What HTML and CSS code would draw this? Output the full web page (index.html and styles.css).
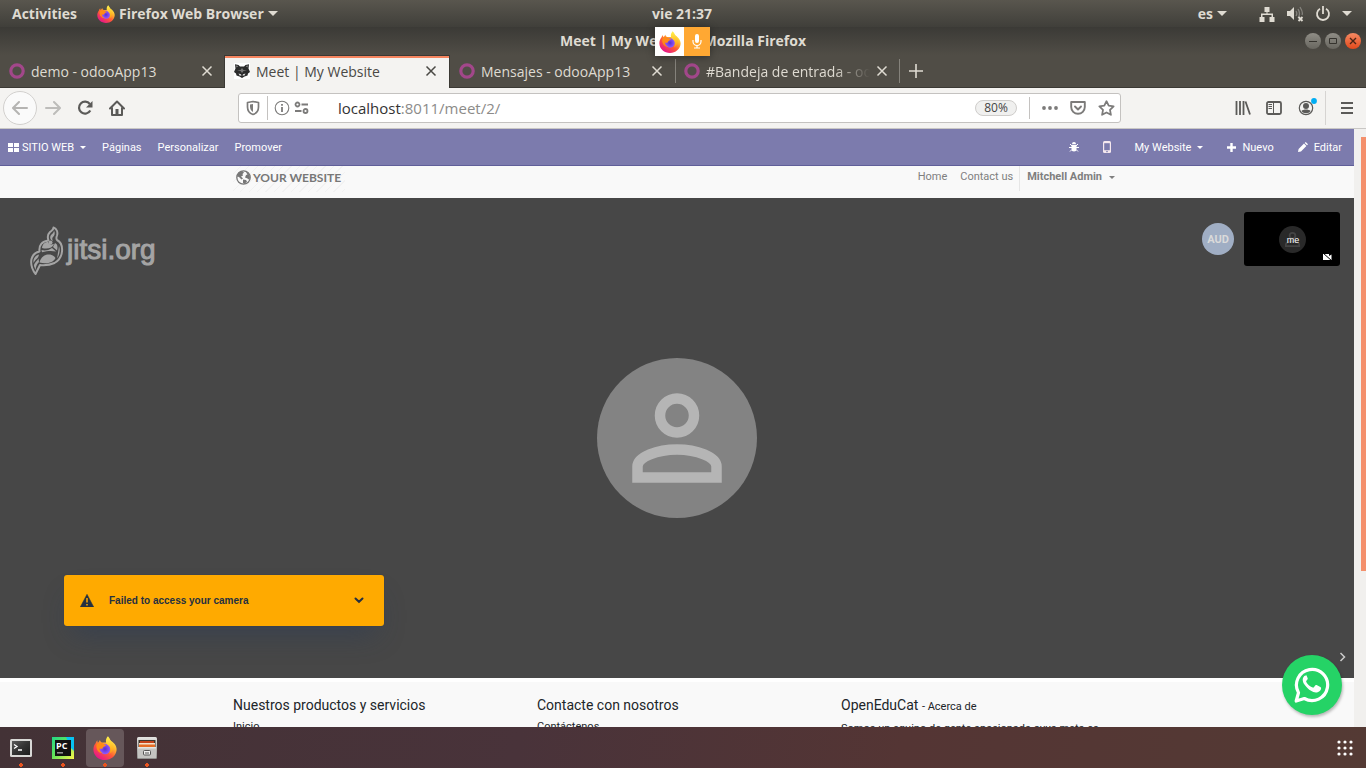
FILE: index.html
```html
<!DOCTYPE html>
<html lang="es">
<head>
<meta charset="utf-8">
<meta name="viewport" content="width=device-width, initial-scale=1">
<title>Meet | My Website</title>
<link rel="stylesheet" href="styles.css">
</head>
<body>
<svg class="defs" width="0" height="0" aria-hidden="true">
  <defs>
    <linearGradient id="fx-body" x1=".85" y1=".1" x2=".25" y2=".95">
      <stop offset="0" stop-color="#fff44f"/><stop offset=".3" stop-color="#ffb52e"/><stop offset=".6" stop-color="#ff5a36"/><stop offset="1" stop-color="#e5158a"/>
    </linearGradient>
    <linearGradient id="fx-flame" x1=".5" y1="0" x2=".5" y2="1">
      <stop offset="0" stop-color="#fff44f"/><stop offset="1" stop-color="#ff980e"/>
    </linearGradient>
    <radialGradient id="fx-globe"><stop offset="0" stop-color="#5b2fd0"/><stop offset="1" stop-color="#9059ff"/></radialGradient>
    <linearGradient id="metal" x1="0" y1="0" x2="0" y2="1"><stop offset="0" stop-color="#e4e4e2"/><stop offset="1" stop-color="#8f8f8d"/></linearGradient>
    <linearGradient id="pc-bg" x1="0" y1="0" x2="1" y2="1"><stop offset="0" stop-color="#21d789"/><stop offset=".45" stop-color="#5fe35a"/><stop offset="1" stop-color="#fcf84a"/></linearGradient>
    <linearGradient id="term-bg" x1="0" y1="0" x2="1" y2="1"><stop offset="0" stop-color="#5a5a5a"/><stop offset=".5" stop-color="#333"/><stop offset="1" stop-color="#1c1c1c"/></linearGradient>
  </defs>
  <symbol id="firefox" viewBox="0 0 24 24">
    <path fill="url(#fx-body)" d="M2.6 7.2c.3-1 .9-2 1.700-2.900 0 .9.200 1.700.600 2.400.6-.5 1.300-1.300 2-2.700.3 1.200.9 2 1.900 2.600L13 6.500l2-5.900c1.300 1.300 2.100 2.700 2.500 3.900C20 6 24 9.200 23.600 14 23 19.800 18.200 24 12 24S.4 19.600.4 13.400c0-2.300.8-4.500 2.200-6.200z"/>
    <circle cx="12" cy="13" r="5.200" fill="url(#fx-globe)"/>
    <path fill="url(#fx-flame)" d="M13 6c-.5-2.300.7-4.400 2-5.700.4 2.400 2.800 4 4.200 6.300 2.600 4.400.9 9.800-3.300 11.300 2.300-2.500 2.300-6.600-.4-8.400C14.200 8.500 13.300 7.800 13 6z"/>
    <path fill="#ff8b16" d="M3.500 8.500C5.500 6.500 8 6 10 7.500c1 .9 1.800 1.200 3.200 1.300-.2 1.400-2 1.600-2.800 2.100-.8.600-.5 1.500-1.300 1.800-1.100.4-2.300-.1-2.800-.5.100 2.500 1.700 4.600 4.300 5-4 .6-7.800-2.700-7.100-8.700z"/>
  </symbol>
  <symbol id="cross" viewBox="0 0 12 12"><path d="M1.500 1.500l9 9m0-9l-9 9" fill="none" stroke="currentColor" stroke-width="1.500"/></symbol>
  <symbol id="ring" viewBox="0 0 16 16"><circle cx="8" cy="8" r="6.200" fill="none" stroke="#a2478a" stroke-width="3.200"/></symbol>
  <symbol id="person" viewBox="0 0 160 160">
    <g fill="none" stroke="currentColor" stroke-width="10.500"><circle cx="80" cy="57.500" r="17"/><path d="M40.500 119.500v-11c0-9.500 20-17 39.500-17s39.500 7.500 39.500 17v11z"/></g>
  </symbol>
</svg>

<div class="desktop">
  <header class="topbar">
    <div class="topbar-side">
      <button class="panel-button">Activities</button>
      <button class="panel-button app-menu"><svg width="18" height="18"><use href="#firefox"/></svg>Firefox Web Browser<i class="caret caret-large"></i></button>
    </div>
    <time class="clock">vie 21:37</time>
    <div class="topbar-side topbar-end">
      <button class="panel-button lang">es<i class="caret caret-large"></i></button>
      <button class="panel-button status" aria-label="Sistema">
        <svg width="16" height="16" viewBox="0 0 16 16" fill="currentColor"><path d="M5.500 1h5v5h-2v1.500H14V11h1.500v5h-5v-5h2V9h-9v2h2v5h-5v-5H2V7.500h5.500V6h-2z"/></svg>
        <svg width="18" height="16" viewBox="0 0 18 16"><path fill="currentColor" d="M1 5h3l4-4v13l-4-4H1z"/><path d="M10 5c1 1.500 1 3.500 0 5m2-7c2 3 2 6 0 9m2-11c2.500 4 3 6 2 8" fill="none" stroke="#85837d" stroke-width="1.300"/><path d="M12.500 11l4 4m0-4l-4 4" stroke="currentColor" stroke-width="1.800"/></svg>
        <svg width="16" height="16" viewBox="0 0 16 16" fill="none" stroke="currentColor" stroke-width="1.800"><path d="M5 2.800a6 6 0 1 0 6 0M8 0v8"/></svg>
        <i class="caret caret-large"></i>
      </button>
    </div>
  </header>

  <div class="titlebar">
    <span></span>
    <h1 class="window-title">Meet | My Website - Mozilla Firefox</h1>
    <div class="window-controls">
      <button class="window-button" aria-label="Minimizar"><svg width="10" height="10" viewBox="0 0 10 10"><path d="M1 5.500h8" stroke="#35332e"/></svg></button>
      <button class="window-button" aria-label="Maximizar"><svg width="10" height="10" viewBox="0 0 10 10"><path d="M1.500 2.500h7v5h-7z" fill="none" stroke="#35332e"/></svg></button>
      <button class="window-button window-close" aria-label="Cerrar"><svg width="10" height="10" viewBox="0 0 10 10"><path d="M2 2l6 6m0-6L2 8" stroke="#4a2415" stroke-width="1.400"/></svg></button>
    </div>
    <div class="sharing"><span class="sharing-app"><svg width="22" height="22"><use href="#firefox"/></svg></span><button class="sharing-mic" aria-label="Micrófono compartido"><svg width="10" height="15" viewBox="0 0 10 15"><rect x="3" y="0" width="4" height="9" rx="2" fill="#fff"/><path d="M1 6v1.500a4 4 0 0 0 8 0V6M5 11.500V14M2 14h6" fill="none" stroke="#fff" stroke-width="1.200"/></svg></button></div>
  </div>

  <nav class="tabs" aria-label="Pestañas">
    <div class="tab"><svg width="16" height="16"><use href="#ring"/></svg><span class="tab-label">demo - odooApp13</span><button class="tab-close" aria-label="Cerrar pestaña"><svg width="12" height="12"><use href="#cross"/></svg></button></div>
    <div class="tab tab-active">
      <svg width="16" height="16" viewBox="0 0 16 16"><path fill="#fff" d="M0 0h16v16H0z"/><path fill="#2b2b2b" d="M1 1.200L4.500 2 6 3.500h4L11.500 2l3.500-.8-.5 4.300L16 9l-2 1.500-.5 2-3 1L8 15l-2.500-1.500-3-1-.5-2L0 9l1.500-3.500z"/><path fill="#aaa" d="M2.200 2.600l1.800.5-1.300 1.500zM13.800 2.600l-1.800.5 1.300 1.500z"/><path fill="#777" d="M8 5L6.500 7 3 7.200l3.500.8L8 10l1.500-2L13 7.200 9.500 7z"/><path fill="#ddd" d="M4.500 10.500l2.500.8.500 1.500L5.500 12.500zM11.500 10.500l-2.500.8-.5 1.500 2-.3z"/></svg>
      <span class="tab-label">Meet | My Website</span><button class="tab-close" aria-label="Cerrar pestaña"><svg width="12" height="12"><use href="#cross"/></svg></button></div>
    <div class="tab"><svg width="16" height="16"><use href="#ring"/></svg><span class="tab-label">Mensajes - odooApp13</span><button class="tab-close" aria-label="Cerrar pestaña"><svg width="12" height="12"><use href="#cross"/></svg></button></div>
    <div class="tab tab-split"><svg width="16" height="16"><use href="#ring"/></svg><span class="tab-label tab-fade">#Bandeja de entrada - odooApp13</span><button class="tab-close" aria-label="Cerrar pestaña"><svg width="12" height="12"><use href="#cross"/></svg></button></div>
    <button class="new-tab" aria-label="Nueva pestaña"><svg width="14" height="14" viewBox="0 0 14 14"><path d="M7 0v14M0 7h14" stroke="currentColor" stroke-width="1.600"/></svg></button>
  </nav>

  <div class="toolbar">
    <div class="tool-group">
      <button class="tool back" aria-label="Atrás"><svg width="16" height="16" viewBox="0 0 16 16" fill="none" stroke="#b5b4b2" stroke-width="2" stroke-linecap="round" stroke-linejoin="round"><path d="M15 8H1.500M7 2L1 8l6 6"/></svg></button>
      <button class="tool" aria-label="Adelante"><svg width="16" height="16" viewBox="0 0 16 16" fill="none" stroke="#bdbcba" stroke-width="2" stroke-linecap="round" stroke-linejoin="round"><path d="M1 8h13.500M9 2l6 6-6 6"/></svg></button>
      <button class="tool" aria-label="Recargar"><svg width="16" height="16" viewBox="0 0 16 16"><path d="M13.300 10.500A6 6 0 1 1 12.800 4" fill="none" stroke="#5b5a58" stroke-width="2.200"/><path d="M15.500 1v6.500H9z" fill="#5b5a58"/></svg></button>
      <button class="tool" aria-label="Inicio"><svg width="16" height="16" viewBox="0 0 16 16"><path d="M1 8.500L8 1.500l7 7M3 7.500V15h10V7.500" fill="none" stroke="#5b5a58" stroke-width="2" stroke-linejoin="round" stroke-linecap="round"/><path d="M6.500 15V9h3v6z" fill="#5b5a58"/></svg></button>
    </div>
    <div class="urlbar">
      <svg class="shield" width="14" height="16" viewBox="0 0 14 16"><path d="M7 1.500l5.500 1V7c0 4-2.500 6.500-5.500 7.500C4 13.500 1.500 11 1.500 7V2.500z" fill="none" stroke="#7c7b7a" stroke-width="1.700" stroke-linejoin="round"/><path d="M7 4v8C5 11 4 9 4 6.500v-2z" fill="#7c7b7a"/></svg>
      <svg class="info" width="16" height="16" viewBox="0 0 16 16"><circle cx="8" cy="8" r="6.800" fill="none" stroke="#7c7b7a" stroke-width="1.100"/><path d="M7.100 7h1.800v5H7.100zM7.100 4h1.800v1.800H7.100z" fill="#7c7b7a"/></svg>
      <svg width="16" height="14" viewBox="0 0 16 14" fill="none" stroke="#7c7b7a" stroke-width="1.800"><circle cx="3.500" cy="3.500" r="2"/><circle cx="11.500" cy="10" r="2"/><path d="M7.500 3.500H14M1 10h6.500"/></svg>
      <p class="url"><b>localhost</b>:8011/meet/2/</p>
      <button class="zoom-level">80%</button>
      <div class="url-actions">
        <button class="tool" aria-label="Más acciones"><svg width="16" height="6" viewBox="0 0 16 6" fill="#7c7b7a"><circle cx="2" cy="3" r="1.900"/><circle cx="8" cy="3" r="1.900"/><circle cx="14" cy="3" r="1.900"/></svg></button>
        <button class="tool" aria-label="Pocket"><svg width="16" height="16" viewBox="0 0 16 16" fill="none" stroke="#7c7b7a" stroke-width="1.900" stroke-linecap="round" stroke-linejoin="round"><path d="M1.200 2h13.600v5a6.800 6.800 0 0 1-13.600 0zM5 6.500l3 3 3-3"/></svg></button>
        <button class="tool" aria-label="Marcador"><svg width="17" height="16" viewBox="0 0 17 16" fill="none" stroke="#7c7b7a" stroke-width="1.800" stroke-linejoin="round"><path d="M8.500 1.200l2.200 4.500 4.900.7-3.600 3.500.9 4.900-4.400-2.300-4.400 2.300.9-4.900L1.400 6.400l4.900-.7z"/></svg></button>
      </div>
    </div>
    <div class="tool-group tool-end">
      <button class="tool" aria-label="Biblioteca"><svg width="16" height="14" viewBox="0 0 16 14" stroke="#5b5a58" stroke-width="1.800"><path d="M1.500 0v14M5 0v14M8.500 0v14M10.500.5L15 13.500"/></svg></button>
      <button class="tool" aria-label="Barra lateral"><svg width="16" height="14" viewBox="0 0 16 14" fill="none" stroke="#5b5a58"><rect x="1" y="1" width="14" height="12" rx="1.500" stroke-width="1.800"/><path d="M7.500 1v12M2.500 3.500H6M2.500 5.500H6M2.500 7.500H6"/></svg></button>
      <button class="tool" aria-label="Cuenta"><svg width="20" height="20" viewBox="0 0 20 20"><circle cx="9" cy="10" r="6.700" fill="none" stroke="#5b5a58" stroke-width="1.200"/><circle cx="9" cy="8" r="3" fill="#5b5a58"/><path d="M4.500 13c1.500-2 7.500-2 9 0-1.500 3-7.500 3-9 0z" fill="#5b5a58"/><circle cx="17" cy="3" r="2.900" fill="#00adf3"/></svg></button>
      <button class="tool menu-tool" aria-label="Menú"><svg width="12" height="14" viewBox="0 0 12 14"><path d="M0 2h12M0 7h12M0 12h12" stroke="#5b5a58" stroke-width="2"/></svg></button>
    </div>
  </div>

  <div class="viewport">
    <main class="page">
      <nav class="editor-bar" aria-label="Editor">
        <ul class="editor-menu">
          <li><a href="#" class="brand"><svg width="11" height="9" viewBox="0 0 11 9" fill="#fff"><path d="M0 0h5v4H0zM6 0h5v4H6zM0 5h5v4H0zM6 5h5v4H6z"/></svg>SITIO WEB<i class="caret"></i></a></li>
          <li><a href="#">Páginas</a></li>
          <li><a href="#">Personalizar</a></li>
          <li><a href="#">Promover</a></li>
        </ul>
        <ul class="editor-menu editor-end">
          <li><a href="#" aria-label="Depurar"><svg width="10" height="10" viewBox="0 0 10 10"><path d="M3 2a2 2 0 0 1 4 0zM2.500 2.800h5V7a2.500 2.500 0 0 1-5 0z" fill="#fff"/><path d="M0 5.500h10M1 2l2 2m6-2L7 4M1 9.500l2-2m6 2l-2-2" stroke="#fff"/></svg></a></li>
          <li><a href="#" class="mobile" aria-label="Vista móvil"><svg width="8" height="12" viewBox="0 0 8 12"><rect width="8" height="12" rx="1.500" fill="#f5e8ee"/><path d="M1.200 2.200h5.600v7H1.200z" fill="#7c7bad"/><circle cx="4" cy="10.600" r=".8" fill="#7c7bad"/></svg></a></li>
          <li><a href="#">My Website<i class="caret"></i></a></li>
          <li><a href="#"><svg width="9" height="9" viewBox="0 0 9 9"><path d="M4.500 0v9M0 4.500h9" stroke="#fff" stroke-width="2.400"/></svg>Nuevo</a></li>
          <li><a href="#"><svg width="10" height="10" viewBox="0 0 10 10" fill="#fff"><path d="M0 10l.6-3L6 1.600 8.400 4 3 9.400zM6.700 1l1-1L10 2.300l-1 1z"/></svg>Editar</a></li>
        </ul>
      </nav>

      <header class="site-header">
        <div class="container site-nav">
          <a href="#" class="site-logo"><svg width="15" height="15" viewBox="0 0 15 15"><circle cx="7.500" cy="7.500" r="6.700" fill="#f9f9f9" stroke="#777" stroke-width="1.300"/><path fill="#777" d="M2.500 3L6 1l2 1.500L6.500 4 7 5.500 5 6.500l2 2-1.500 1L3 7 1 6.500zM9.500 1.500l3 2L14 7l-.5 3-2-1.500L9 7.500 10 5l1.500-.5zM7 9.500l3 .5 1 1.500L8.500 14 7 13z"/></svg>YOUR WEBSITE</a>
          <ul class="site-links">
            <li><a href="#">Home</a></li>
            <li><a href="#">Contact us</a></li>
            <li class="user"><a href="#">Mitchell Admin<i class="caret"></i></a></li>
          </ul>
        </div>
      </header>

      <section class="meet" aria-label="Videollamada">
        <a href="#" class="watermark">
          <svg width="34" height="50" viewBox="0 0 34 50" stroke-linejoin="round"><path fill="#474747" stroke="#a4a4a4" stroke-width="2" d="M23.500 1.500c3.500 1 4.500 5 3.500 8-.8 2-.8 3.500 0 4.500 4 2 5.500 6 5 11.500-.5 5-3 9-7.500 11.500-4.500 2-9.500 2.500-14.500 2L5.500 48C2.500 44 .5 38 1.500 33c1-4 4-6.500 8-7.500-.8-6 2.500-10.500 9-11-1.500-4-.5-6.500 1.500-8.500 2-1.500 3.500-2 3.500-4.500z"/><g fill="#a4a4a4"><path d="M24 4.500c1.500 3 .5 5-1 6.500-1 1-1 2.500 0 4-3-1-3.500-4-2-6 1.500-1.500 3-2.500 3-4.500z"/><circle cx="20.500" cy="16.500" r="2"/><path d="M12 22c.5-4 3-6 6-6 1 2.500 3 3 6 2-1.500 4-6.500 5.500-12 4zM25 17c2.500 1 3 3.500 2 7.500L23 21zM11.500 24c3 1 7 .5 10.500-2l4 3.500c-5-1-9-.5-14 .8zM29 20c1.500 4 .5 9-2 12.500.5-3 1.500-8 2-12.500zM9.500 36.500C11 31 14.500 28.500 19 28.500c3 0 5 1.500 6.500 3.500-2 4.500-9 6.500-16 4.500zM9 28.500C5 29.500 3 33 3.500 37c2-4 5-4.500 5.500-8.500zM8.500 32.500c-1.500 3-4.500 4-4.500 7.500l1.500 4c.5-4 1.500-6 3.500-8z"/></g></svg>
          <span>jitsi.org</span>
        </a>
        <svg class="big-avatar" width="160" height="160"><use href="#person"/></svg>
        <div class="filmstrip">
          <span class="audio-badge">AUD</span>
          <div class="self-view">
            <span class="self-avatar"><svg class="self-person" width="27" height="27"><use href="#person"/></svg><span class="self-name">me</span></span>
            <svg class="camera-off" width="9" height="8" viewBox="0 0 9 8"><path d="M0 1h6v2l2.500-1.500v5.500H0z" fill="#fff"/><path d="M0 0l9 8" stroke="#000"/></svg>
          </div>
        </div>
        <div class="notice" role="alert">
          <svg width="14" height="13" viewBox="0 0 14 13"><path d="M7 .3L13.700 13H.3z" fill="#253040" stroke="#253040" stroke-width=".5" stroke-linejoin="round"/><path d="M7 4v4.500M7 10v1.500" stroke="#fa0" stroke-width="1.500"/></svg>
          <p class="notice-text">Failed to access your camera</p>
          <button class="notice-toggle" aria-label="Mostrar detalles"><svg width="10" height="7" viewBox="0 0 10 7"><path d="M1.500 1.500L5 4.800l3.500-3.300" fill="none" stroke="#253040" stroke-width="2" stroke-linecap="round"/></svg></button>
        </div>
        <button class="strip-toggle" aria-label="Ocultar miniaturas"><svg width="7" height="10" viewBox="0 0 7 10"><path d="M1.500 1l4 4-4 4" fill="none" stroke="#ccc" stroke-width="1.500"/></svg></button>
      </section>

      <footer class="site-footer">
        <div class="container footer-columns">
          <section><h2 class="footer-title">Nuestros productos y servicios</h2><a href="#">Inicio</a></section>
          <section><h2 class="footer-title">Contacte con nosotros</h2><a href="#">Contáctenos</a></section>
          <section><h2 class="footer-title">OpenEduCat <small>- Acerca de</small></h2><p>Somos un equipo de gente apasionada cuya meta es</p></section>
        </div>
      </footer>
      <a href="#" class="whatsapp" aria-label="WhatsApp"><svg width="36" height="36" viewBox="0 0 36 36"><path d="M2.200 34l2.300-8.300A15.600 15.600 0 1 1 10.300 31.500z" fill="none" stroke="#fff" stroke-width="3.200" stroke-linejoin="round"/><path fill="#fff" d="M12.300 9.500c-.6-.2-1.500-.1-2 .5-3 3.300-1.200 7 1.300 10 3.300 4.300 8.400 7.300 12 6.200 2.200-.8 3.700-2.400 3.500-4.300 0-.5-.3-.8-.8-1l-3.700-1.800c-.6-.3-1-.1-1.300.3l-1.500 1.900c-.3.400-.7.400-1.200.2-3-1.200-5-3.200-6.300-5.600-.3-.5-.2-.9.100-1.200l1.200-1.500c.2-.4.200-.7 0-1.100l-1.600-3.900z" transform="translate(0 -1)"/></svg></a>
    </main>
    <div class="scrollbar"><div class="scroll-thumb"></div></div>
  </div>

  <nav class="dock" aria-label="Dock">
    <div class="dock-apps">
      <button class="dock-app" aria-label="Terminal"><svg width="22" height="22" viewBox="0 0 22 22"><rect x="0" y="2" width="22" height="18" rx="1.500" fill="#d8d8d6"/><rect x="2" y="4" width="18" height="14" fill="url(#term-bg)"/><path d="M4 7.500l3 2-3 2M8 13h4" fill="none" stroke="#fff" stroke-width="1.300"/></svg></button>
      <button class="dock-app" aria-label="PyCharm"><svg width="22" height="22" viewBox="0 0 22 22"><path fill="url(#pc-bg)" d="M0 0h22v22H0z"/><path fill="#07c3f2" d="M14 0h8v14l-4-4z"/><path fill="#111" d="M3 3h16v16H3z"/><path d="M5 15.800h6" stroke="#999" stroke-width="1.500"/><text x="4" y="12" class="pc-text">PC</text></svg></button>
      <button class="dock-app dock-current" aria-label="Firefox"><svg width="24" height="24"><use href="#firefox"/></svg></button>
      <button class="dock-app" aria-label="Archivos"><svg width="20" height="22" viewBox="0 0 20 22"><rect width="20" height="22" rx="1.500" fill="url(#metal)"/><path d="M1.500 3h17v8h-17z" fill="#40372f"/><path d="M3 4h14v2H3z" fill="#c5431a"/><path d="M2 6h16v2H2z" fill="#f3e0cb"/><path d="M2 7.500h16V10H2z" fill="#e66c25"/><path d="M1 10h18v11H1z" fill="#c4c4c2"/><path d="M1 10h18v1.500H1z" fill="#e4e4e2"/><rect x="6.500" y="13.500" width="7" height="4.500" rx="1" fill="#eee" stroke="#555"/><path d="M8 16h4" stroke="#555"/></svg></button>
    </div>
    <button class="dock-grid" aria-label="Mostrar aplicaciones"><svg width="16" height="16" viewBox="0 0 16 16" fill="#fff"><circle cx="2" cy="2" r="1.600"/><circle cx="8" cy="2" r="1.600"/><circle cx="14" cy="2" r="1.600"/><circle cx="2" cy="8" r="1.600"/><circle cx="8" cy="8" r="1.600"/><circle cx="14" cy="8" r="1.600"/><circle cx="2" cy="14" r="1.600"/><circle cx="8" cy="14" r="1.600"/><circle cx="14" cy="14" r="1.600"/></svg></button>
  </nav>
</div>
</body>
</html>
```
FILE: styles.css
```css
* { box-sizing: border-box; }
body { margin: 0; font-family: "Open Sans", "Noto Sans", sans-serif; font-size: 14px; }
button { padding: 0; border: 0; background: none; color: inherit; font: inherit; cursor: pointer; }
a { color: inherit; text-decoration: none; }
ul, p, h1, h2 { margin: 0; padding: 0; list-style: none; }
svg { flex: none; display: block; }
.defs { position: absolute; }

.desktop { display: flex; flex-direction: column; height: 100vh; overflow: hidden; }
.caret { display: inline-block; margin-left: 7px; border: 3px solid transparent; border-top-color: currentColor; border-bottom: 0; vertical-align: middle; }
.caret-large { margin-left: 0; border-width: 5px; border-bottom: 0; }

/* System panel */
.topbar { display: grid; grid-template-columns: 1fr auto 1fr; align-items: center; flex: none; height: 27px; padding: 0 14px 0 12px; background: linear-gradient(#59564e, #403f3a); color: #dfdbd2; font-weight: 700; }
.topbar-side { display: flex; align-items: center; gap: 20px; }
.topbar-end { justify-content: flex-end; gap: 32px; }
.panel-button { display: flex; align-items: center; gap: 4px; }
.status { gap: 11px; }
.clock { line-height: 26px; }

/* Window frame */
.titlebar { position: relative; display: grid; grid-template-columns: 1fr auto 1fr; align-items: center; flex: none; height: 28px; padding: 0 5px; background: linear-gradient(#3b3a36, #504d46); color: #dfdbd2; }
.window-title { font-size: 14px; font-weight: 700; line-height: 26px; }
.window-controls { display: flex; justify-content: flex-end; gap: 4px; }
.window-button { display: grid; place-items: center; width: 16px; height: 16px; border-radius: 50%; background: linear-gradient(#8f8d86, #68665f); }
.window-close { background: linear-gradient(#f58a63, #e2491b); }
.sharing { position: absolute; top: 0; left: 50%; display: flex; height: 29px; margin-left: -28px; box-shadow: 0 1px 8px #0006; z-index: 1; }
.sharing-app { display: grid; place-items: center; width: 29px; background: #fff; }
.sharing-mic { display: grid; place-items: center; width: 26px; background: #ffa833; }

.tabs { display: flex; flex: none; height: 33px; background: #504d46; border-bottom: 1px solid #3b3934; color: #dfdbd2; }
.tab { display: flex; align-items: center; gap: 6px; width: 225px; padding: 0 12px 0 9px; }
.tab-active { width: 226px; height: 33px; margin-left: -1px; padding-bottom: 2px; border: solid #3b3934; border-width: 1px 1px 0; background: linear-gradient(#f6855f 2px, #f4f3f1 2px); color: #4a4945; }
.tab-label { flex: 1; overflow: hidden; white-space: nowrap; }
.tab-fade { -webkit-mask-image: linear-gradient(to left, transparent, #000 36px); mask-image: linear-gradient(to left, transparent, #000 36px); }
.tab-split { background: linear-gradient(#85827b, #85827b) left / 1px 24px no-repeat, linear-gradient(#85827b, #85827b) right / 1px 24px no-repeat; }
.new-tab { padding: 0 9px; }

.toolbar { display: flex; align-items: center; flex: none; height: 41px; padding: 0 13px 0 3px; background: #f4f3f1; border-bottom: 1px solid #c9c7c5; }
.tool-group { display: flex; align-items: center; gap: 16px; }
.tool { display: grid; place-items: center; }
.back { width: 34px; height: 34px; margin-right: -8px; border: 1px solid #d2d0ce; border-radius: 50%; background: #fafafa; }
.urlbar { display: flex; align-items: center; flex: 1; height: 30px; margin: 0 114px 0 113px; padding: 0 5px 0 7px; border: 1px solid #c4c2c0; border-radius: 3px; background: #fff; }
.shield { margin-right: 7px; }
.info { box-sizing: content-box; padding: 4px 4px 4px 6px; border-left: 1px solid #c4c2c0; }
.url { flex: 1; margin-left: 28px; color: #8c8b89; font-size: 15px; }
.url b { color: #333; font-weight: 400; }
.zoom-level { width: 42px; height: 16px; border: 1px solid #cfcdcb; border-radius: 8px; background: #f0f0ef; color: #444; font-size: 12px; line-height: 14px; }
.url-actions { display: flex; align-items: center; gap: 12px; height: 22px; margin-left: 12px; padding-left: 12px; border-left: 1px solid #c4c2c0; }
.tool-end { gap: 15px; }
.menu-tool { height: 34px; margin-left: -7px; padding-left: 15px; border-left: 1px solid #d6d4d2; }

/* Browser content */
.viewport { display: flex; flex: 1; min-height: 0; }
.page { position: relative; display: flex; flex-direction: column; flex: 1; overflow: hidden; background: #fff; font-family: Roboto, sans-serif; font-size: 11px; }
.scrollbar { width: 12px; padding: 8px 0 156px 7px; background: #f1f0ee; }
.scroll-thumb { height: 100%; background: #f4906c; }

.editor-bar { display: flex; justify-content: space-between; flex: none; height: 37px; padding: 0 12px 0 8px; background: #7c7bad; border-bottom: 1px solid #605f99; color: #fff; }
.editor-menu { display: flex; align-items: center; gap: 16px; }
.editor-menu a { display: flex; align-items: center; gap: 6px; }
.editor-menu .brand { gap: 3px; }
.editor-menu .caret { margin-left: 0; }
.editor-menu .brand .caret { margin-left: 3px; }
.editor-end { gap: 24px; }

.container { width: 100%; max-width: 912px; margin: 0 auto; padding: 0 12px; }
.site-header { flex: none; height: 32px; background: #f9f9f9; color: #7f7f7f; }
.site-nav { display: flex; justify-content: space-between; align-items: flex-start; }
.site-logo { display: flex; align-items: center; gap: 2px; height: 26px; padding: 0 4px 4px 3px; background: repeating-linear-gradient(135deg, #f9f9f9 0 5px, #f2f2f2 5px 6px); color: #777; font-family: Lato, sans-serif; font-size: 12px; font-weight: 700; }
.site-links { display: flex; gap: 13px; line-height: 21px; }
.user { height: 25px; margin-left: -7px; padding: 0 6px 0 7px; border-left: 1px solid #e6e6e6; font-weight: 700; }

.meet { display: grid; flex: none; height: 480px; padding: 14px; background: #474747; }
.meet > * { grid-area: 1 / 1; }
.watermark { display: flex; justify-self: start; align-self: start; gap: 3px; padding: 14px 16px; color: #a4a4a4; font-family: "Liberation Sans", Arial, sans-serif; font-size: 28px; line-height: 48px; -webkit-text-stroke: 1px #a4a4a4; }
.big-avatar { place-self: center; border-radius: 50%; background: #838383; color: #b5b5b5; }
.filmstrip { display: flex; justify-self: end; align-self: start; align-items: center; gap: 10px; }
.audio-badge { display: grid; place-items: center; width: 32px; height: 32px; border-radius: 50%; background: #a0aec4; color: #dadada; font-size: 11px; font-weight: 700; }
.self-view { position: relative; display: grid; place-items: center; width: 96px; height: 54px; border-radius: 3px; background: #000; }
.self-avatar { display: grid; place-items: center; width: 27px; height: 27px; border-radius: 50%; background: #292929; }
.self-avatar > * { grid-area: 1 / 1; }
.self-person { color: #444; }
.self-name { padding: 2px 0 0 2px; color: #fff; font-family: "Liberation Sans", Arial, sans-serif; font-size: 9px; }
.camera-off { position: absolute; right: 8px; bottom: 5px; }
.notice { display: flex; align-items: center; justify-self: start; align-self: end; width: 320px; height: 51px; margin: 0 50px 38px; padding: 0 20px 0 16px; border-radius: 3px; background: #fa0; box-shadow: 0 16px 28px -8px #25385870, 0 0 1px #253858; color: #253040; }
.notice-text { flex: 1; margin-left: 15px; font-family: "Liberation Sans", Arial, sans-serif; font-size: 10px; font-weight: 700; }
.strip-toggle { justify-self: end; align-self: end; margin: 0 -6px 2px 0; }

.site-footer { flex: 1; margin-top: 4px; padding-top: 14px; background: #f9f9f9; color: #212529; }
.footer-columns { display: grid; grid-template-columns: repeat(3, 1fr); gap: 24px; padding: 0 12px; line-height: 18px; white-space: nowrap; }
.footer-title { margin-bottom: 4px; font-size: 14px; font-weight: 400; }
.footer-title small { font-size: 11px; }
.whatsapp { position: absolute; right: 12px; bottom: 12px; display: grid; place-items: center; width: 60px; height: 60px; border-radius: 50%; background: #25d366; box-shadow: 1px 2px 3px #0004; }

/* Launcher */
.dock { display: flex; justify-content: space-between; align-items: center; flex: none; height: 41px; padding: 0 13px 0 2px; background: linear-gradient(100deg, #433236, #49333a 38%, #543534 66%, #543a34); }
.dock-apps { display: flex; gap: 4px; }
.dock-app { display: grid; place-items: center; width: 38px; height: 38px; border-radius: 4px; background: radial-gradient(circle, #e95420 2px, transparent 2px) center 17px no-repeat; }
.dock-current { background-color: #66575a; }
.pc-text { fill: #fff; font: 700 9px "Open Sans", sans-serif; }
```
